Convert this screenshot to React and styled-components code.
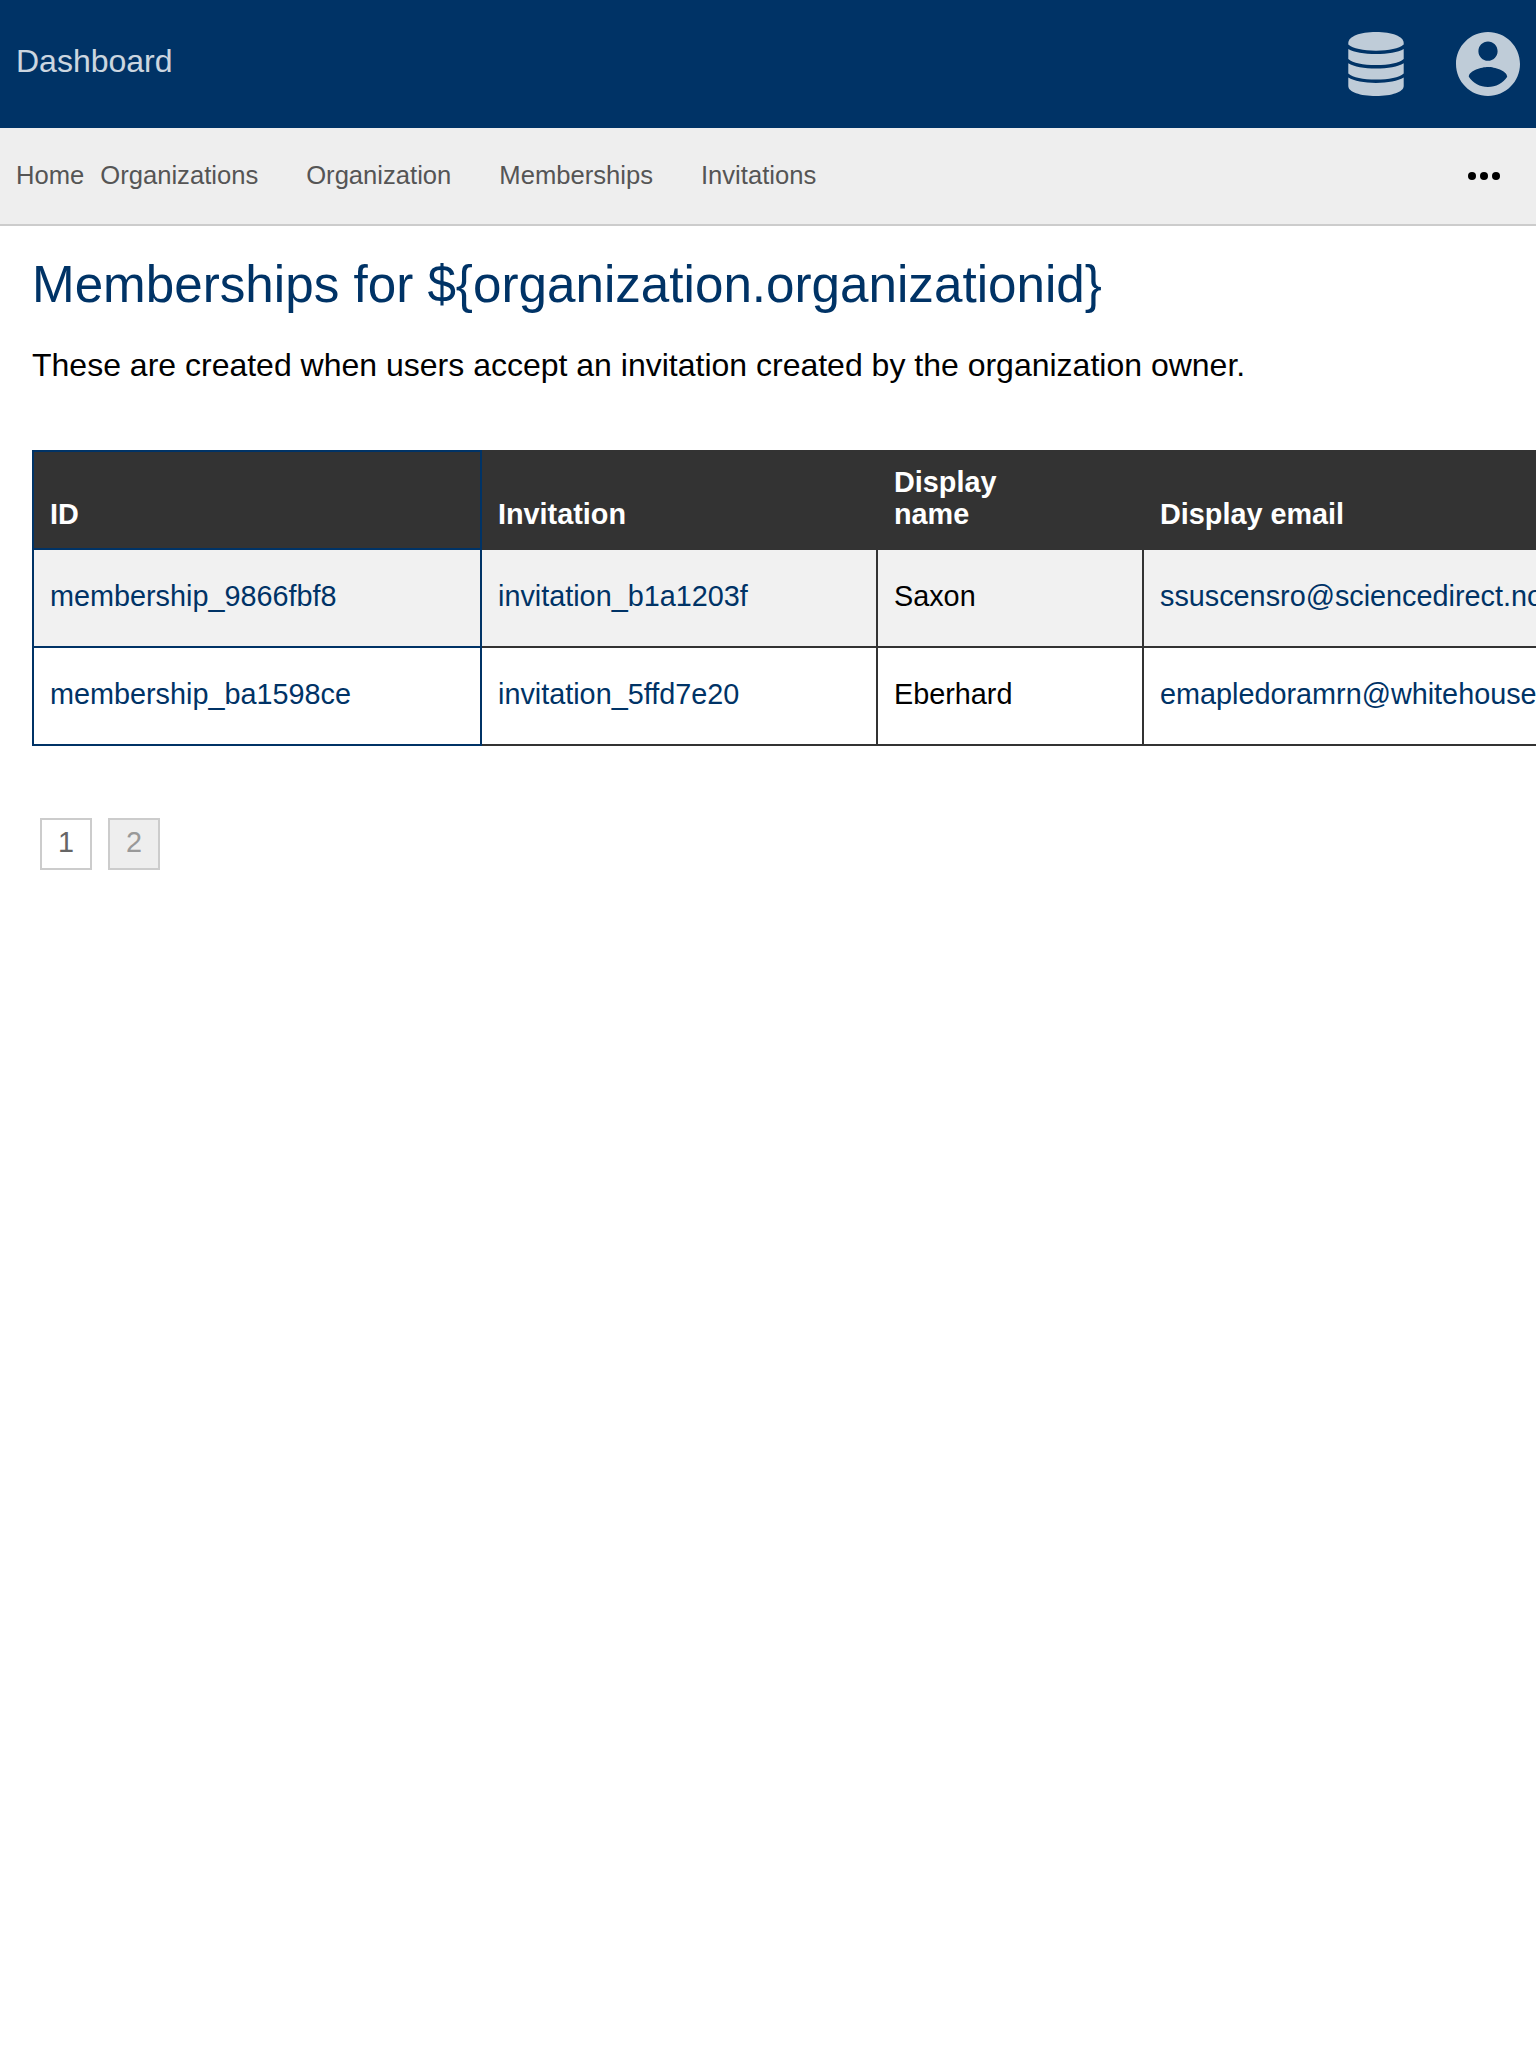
import React from "react";
import styled, { createGlobalStyle } from "styled-components";

const NAVY = "#003366";
const DARK = "#333333";

const GlobalStyle = createGlobalStyle`
  body {
    margin: 0;
    background: #fff;
    color: #000;
    font-family: "Liberation Sans", Arial, sans-serif;
    font-size: 32px;
    overflow: hidden;
  }
`;

const Page = styled.div`
  min-height: 2048px;
  overflow: hidden;
`;

const Header = styled.header`
  display: flex;
  align-items: center;
  justify-content: space-between;
  box-sizing: border-box;
  height: 128px;
  padding: 0 16px;
  background: ${NAVY};
`;

const Brand = styled.a`
  color: #fff;
  opacity: 0.8;
  line-height: 36px;
  padding-bottom: 6px;
`;

const HeaderIcons = styled.div`
  display: flex;
  gap: 52px;
  color: #fff;
`;

const HeaderIcon = styled.svg`
  display: block;
  width: ${(p) => p.$width}px;
  height: 64px;
  fill: currentColor;
  opacity: 0.75;
`;

const NavBar = styled.nav`
  display: flex;
  align-items: center;
  height: 96px;
  padding: 0 36px 0 16px;
  background: #eee;
  border-bottom: 2px solid #ccc;
`;

const NavLink = styled.a`
  color: #555;
  font-size: 25.6px;
  line-height: 30px;
  padding-bottom: 2px;
  margin-right: ${(p) => p.$gap}px;
`;

const MoreIcon = styled.svg`
  display: block;
  width: 32px;
  height: 8px;
  margin-left: auto;
`;

const Content = styled.main`
  padding: 29px 32px 0;
`;

const Title = styled.h1`
  margin: 0;
  color: ${NAVY};
  font-size: 51.2px;
  font-weight: 400;
  line-height: 60px;
`;

const Intro = styled.p`
  margin: 32px 0 0;
  line-height: 36px;
`;

const Table = styled.table`
  width: 1800px;
  margin-top: 67px;
  table-layout: fixed;
  border-collapse: collapse;
  font-size: 28.8px;
  line-height: 32px;
`;

const Col = styled.col`
  width: ${(p) => p.$width}px;
`;

const HeadCell = styled.th`
  padding: 14px 16px 18px;
  border: 2px solid ${(p) => (p.$key ? NAVY : DARK)};
  background: ${DARK};
  color: #fff;
  text-align: left;
  vertical-align: bottom;
`;

const Row = styled.tr`
  background: ${(p) => (p.$shaded ? "#f1f1f1" : "#fff")};
`;

const Cell = styled.td`
  padding: 30px 16px 34px;
  border: 2px solid ${(p) => (p.$key ? NAVY : DARK)};
  white-space: nowrap;
`;

const CellLink = styled.a`
  color: ${NAVY};
`;

const HeadLabel = styled.span`
  display: block;
  max-width: ${(p) => (p.$narrow ? "120px" : "none")};
`;

const Pagination = styled.div`
  display: flex;
  gap: 16px;
  margin: 72px 0 0 8px;
`;

const PageButton = styled.a`
  box-sizing: border-box;
  width: 52px;
  height: 52px;
  border: 2px solid #ccc;
  background: ${(p) => (p.$muted ? "#eee" : "#fff")};
  color: ${(p) => (p.$muted ? "#999" : "#666")};
  font-size: 28.8px;
  line-height: 44px;
  text-align: center;
`;

const navItems = [
  { label: "Home", gap: 16 },
  { label: "Organizations", gap: 48 },
  { label: "Organization", gap: 48 },
  { label: "Memberships", gap: 48 },
  { label: "Invitations", gap: 0 },
];

const members = [
  {
    id: "membership_9866fbf8",
    invitation: "invitation_b1a1203f",
    name: "Saxon",
    email: "ssuscensro@sciencedirect.no",
  },
  {
    id: "membership_ba1598ce",
    invitation: "invitation_5ffd7e20",
    name: "Eberhard",
    email: "emapledoramrn@whitehouse",
  },
];

function DatabaseIcon() {
  return (
    <HeaderIcon $width={56} viewBox="0 0 56 64">
      <path d="M0.300 11C0.300 4.500 12 0 28 0S55.700 4.500 55.700 11V12.500C51 16.500 41 18.700 28 18.700S5 16.500 0.300 12.500Z" />
      <path d="M0.300 17C6 20.300 16 22 28 22S50 20.300 55.700 17V27C51 31 41 33 28 33S5 31 0.300 27Z" />
      <path d="M0.300 31.200C6 34.700 16 36.500 28 36.500S50 34.700 55.700 31.200V41.400C51 45.400 41 47.400 28 47.400S5 45.400 0.300 41.400Z" />
      <path d="M0.300 45.600C6 49.100 16 51 28 51S50 49.100 55.700 45.600V54C55.700 60 44 64 28 64S0.300 60 0.300 54Z" />
    </HeaderIcon>
  );
}

function AccountIcon() {
  return (
    <HeaderIcon $width={64} viewBox="2 2 20 20">
      <path d="M12 2C6.480 2 2 6.480 2 12s4.480 10 10 10 10-4.480 10-10S17.520 2 12 2zm0 3c1.660 0 3 1.340 3 3s-1.340 3-3 3-3-1.340-3-3 1.340-3 3-3zm0 14.200c-2.500 0-4.710-1.280-6-3.220.03-1.990 4-3.080 6-3.080 1.990 0 5.970 1.090 6 3.080-1.290 1.940-3.500 3.220-6 3.220z" />
    </HeaderIcon>
  );
}

export default function App() {
  return (
    <Page>
      <GlobalStyle />
      <Header>
        <Brand>Dashboard</Brand>
        <HeaderIcons>
          <DatabaseIcon />
          <AccountIcon />
        </HeaderIcons>
      </Header>
      <NavBar>
        {navItems.map((item) => (
          <NavLink key={item.label} $gap={item.gap}>
            {item.label}
          </NavLink>
        ))}
        <MoreIcon viewBox="0 0 32 8">
          <circle cx="4" cy="4" r="4" />
          <circle cx="16" cy="4" r="4" />
          <circle cx="28" cy="4" r="4" />
        </MoreIcon>
      </NavBar>
      <Content>
        <Title>{"Memberships for ${organization.organizationid}"}</Title>
        <Intro>
          These are created when users accept an invitation created by the
          organization owner.
        </Intro>
        <Table>
          <colgroup>
            <Col $width={448} />
            <Col $width={396} />
            <Col $width={266} />
            <col />
          </colgroup>
          <thead>
            <tr>
              <HeadCell $key>ID</HeadCell>
              <HeadCell>Invitation</HeadCell>
              <HeadCell>
                <HeadLabel $narrow>Display name</HeadLabel>
              </HeadCell>
              <HeadCell>Display email</HeadCell>
            </tr>
          </thead>
          <tbody>
            {members.map((m, i) => (
              <Row key={m.id} $shaded={i % 2 === 0}>
                <Cell $key>
                  <CellLink>{m.id}</CellLink>
                </Cell>
                <Cell>
                  <CellLink>{m.invitation}</CellLink>
                </Cell>
                <Cell>{m.name}</Cell>
                <Cell>
                  <CellLink>{m.email}</CellLink>
                </Cell>
              </Row>
            ))}
          </tbody>
        </Table>
        <Pagination>
          <PageButton>1</PageButton>
          <PageButton $muted>2</PageButton>
        </Pagination>
      </Content>
    </Page>
  );
}
